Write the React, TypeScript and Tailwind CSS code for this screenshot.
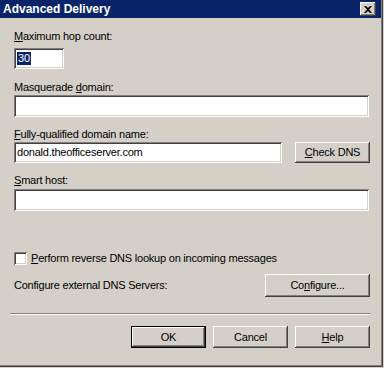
import type { ReactNode } from 'react'

const raised =
  'bg-[#d4d0c8] shadow-[inset_-1px_-1px_#404040,inset_1px_1px_#ffffff,inset_-2px_-2px_#808080,inset_2px_2px_#d4d0c8]'
const sunken =
  'bg-white shadow-[inset_1px_1px_#808080,inset_-1px_-1px_#ffffff,inset_2px_2px_#404040,inset_-2px_-2px_#d4d0c8]'

function Key({ children }: { children: ReactNode }) {
  return <span className="underline underline-offset-[1px]">{children}</span>
}

function Button({ children, className = '', isDefault = false }: { children: ReactNode; className?: string; isDefault?: boolean }) {
  if (isDefault) {
    return (
      <div className={`border border-black ${className}`}>
        <div className={`flex h-full w-full items-center justify-center ${raised}`}>{children}</div>
      </div>
    )
  }
  return <div className={`flex items-center justify-center ${raised} ${className}`}>{children}</div>
}

function TextBox({ className = '', children }: { className?: string; children?: ReactNode }) {
  return <div className={`flex items-center px-[3px] ${sunken} ${className}`}>{children}</div>
}

export default function App() {
  return (
    <div className="h-[368px] w-[384px] overflow-hidden bg-[#d4d0c8] text-[11px] leading-[13px] tracking-[-0.22px] text-black [font-family:'Liberation_Sans',Arial,sans-serif]">
      <div className="h-[367px] w-[383px] shadow-[inset_-1px_-1px_#404040,inset_-2px_-2px_#808080]">
        {/* title bar */}
        <div className="flex h-[18px] w-[381px] items-center justify-between bg-[#0a246a] pl-[3px] pr-[5px]">
          <span className="text-[12px] font-bold tracking-normal text-white">Advanced Delivery</span>
          <div className={`flex h-[14px] w-[16px] items-center justify-center ${raised}`}>
            <svg width="8" height="7" viewBox="0 0 8 7">
              <path d="M0 0h2l2 2 2-2h2L5 3.5 8 7H6L4 5 2 7H0l3-3.5z" fill="#000" />
            </svg>
          </div>
        </div>

        <div className="pl-[14px] pr-[14px]">
          <div className="mt-[12px]">
            <Key>M</Key>aximum hop count:
          </div>
          <TextBox className="mt-[5px] h-[21px] w-[50px]">
            <span className="bg-[#0a246a] px-[1px] text-white">30</span>
          </TextBox>

          <div className="mt-[12px]">
            Masquerade <Key>d</Key>omain:
          </div>
          <TextBox className="mt-[1px] h-[22px] w-[355px]" />

          <div className="mt-[11px]">
            <Key>F</Key>ully-qualified domain name:
          </div>
          <div className="mt-[1px] flex w-[356px] justify-between">
            <TextBox className="h-[21px] w-[268px]">donald.theofficeserver.com</TextBox>
            <Button className="h-[21px] w-[75px]">
              <span>
                <Key>C</Key>heck DNS
              </span>
            </Button>
          </div>

          <div className="mt-[11px]">
            <Key>S</Key>mart host:
          </div>
          <TextBox className="mt-[2px] h-[22px] w-[355px]" />

          <div className="mt-[41px] flex h-[13px] items-center">
            <div className={`h-[13px] w-[13px] ${sunken}`} />
            <span className="ml-[4px]">
              <Key>P</Key>erform reverse DNS lookup on incoming messages
            </span>
          </div>

          <div className="mt-[9px] flex w-[356px] items-center justify-between">
            <span>Configure external DNS Servers:</span>
            <Button className="h-[23px] w-[105px]">
              <span>
                Co<Key>n</Key>figure...
              </span>
            </Button>
          </div>
        </div>

        <div className="ml-[10px] mt-[16px] h-[2px] w-[360px] border-t border-b border-t-[#808080] border-b-white" />

        <div className="mt-[11px] flex justify-end gap-[7px] pr-[13px]">
          <Button isDefault className="h-[22px] w-[75px]">
            OK
          </Button>
          <Button className="h-[22px] w-[75px]">Cancel</Button>
          <Button className="h-[22px] w-[75px]">
            <span>
              <Key>H</Key>elp
            </span>
          </Button>
        </div>
      </div>
    </div>
  )
}
